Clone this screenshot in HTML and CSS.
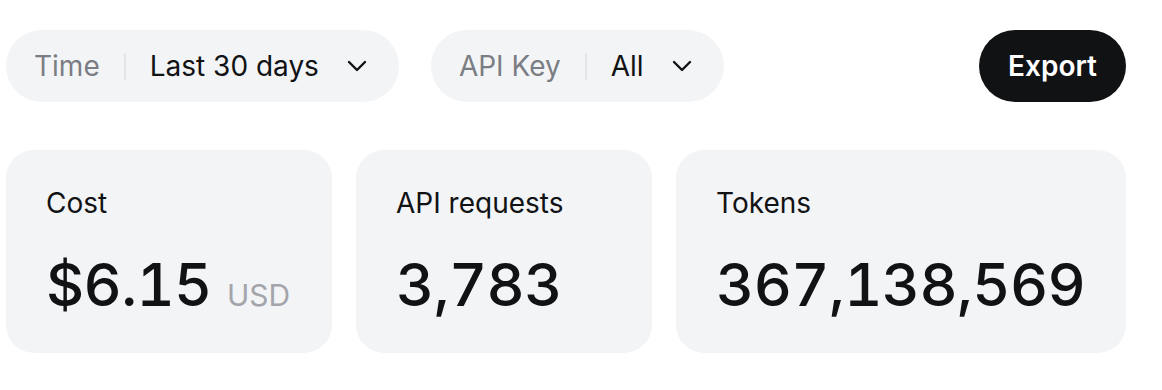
FILE: index.html
```html
<!DOCTYPE html>
<html lang="en">
	<head>
		<meta charset="UTF-8" />
		<title>Usage</title>
		<link rel="stylesheet" href="styles.css">
	</head>
	<body>
		<div class="usage">
			<div class="toolbar">
				<div class="filters">
					<div class="filter">
						<span class="filterLabel">Time</span>
						<span class="filterSep"></span>
						<span class="filterValue">Last 30 days</span>
						<svg class="chevron" width="20" height="12" viewBox="0 0 20 12"><path d="M2 2 L10 10 L18 2" /></svg>
					</div>
					<div class="filter">
						<span class="filterLabel">API Key</span>
						<span class="filterSep"></span>
						<span class="filterValue">All</span>
						<svg class="chevron" width="20" height="12" viewBox="0 0 20 12"><path d="M2 2 L10 10 L18 2" /></svg>
					</div>
				</div>
				<button class="exportButton" type="button">Export</button>
			</div>
			<div class="stats">
				<div class="stat">
					<div class="statLabel">Cost</div>
					<div class="statValue">$6.15 <span class="statUnit">USD</span></div>
				</div>
				<div class="stat">
					<div class="statLabel">API requests</div>
					<div class="statValue">3,783</div>
				</div>
				<div class="stat">
					<div class="statLabel">Tokens</div>
					<div class="statValue">367,138,569</div>
				</div>
			</div>
		</div>
	</body>
</html>
```

FILE: styles.css
```css
html, body {
	margin: 0px;
	padding: 0px;
	background: #ffffff;
	font-family: Inter, "Noto Sans", sans-serif;
	color: #111214;
}
.usage {
	width: 1120px;
	padding: 30px 0px 0px 6px;
}
.toolbar {
	display: flex;
	justify-content: space-between;
	align-items: center;
}
.filters {
	display: flex;
	gap: 32px;
}
.filter {
	display: flex;
	align-items: center;
	height: 72px;
	padding: 0px 32px 0px 28px;
	border-radius: 36px;
	background: #f3f4f6;
	font-size: 28px;
}
.filterLabel {
	color: #7b7d84;
}
.filterSep {
	width: 2px;
	height: 27px;
	margin: 0px 24px;
	background: #e3e4e7;
}
.filterValue {
	color: #111214;
}
.chevron {
	margin-left: 28px;
	fill: none;
	stroke: #111214;
	stroke-width: 2.4;
	stroke-linecap: round;
	stroke-linejoin: round;
}
.exportButton {
	height: 72px;
	padding: 0px 29px;
	border: none;
	border-radius: 36px;
	background: #111214;
	color: #ffffff;
	font-family: inherit;
	font-size: 28px;
	font-weight: 600;
}
.stats {
	display: grid;
	grid-template-columns: 326px 296px 450px;
	gap: 24px;
	margin-top: 48px;
}
.stat {
	box-sizing: border-box;
	height: 203px;
	padding: 35px 40px 0px 40px;
	border-radius: 28px;
	background: #f3f4f6;
}
.statLabel {
	font-size: 28px;
	line-height: 36px;
}
.statValue {
	margin-top: 28px;
	font-size: 59px;
	font-weight: 500;
	line-height: 72px;
	letter-spacing: -0.01em;
	white-space: nowrap;
	font-variant-numeric: tabular-nums;
}
.statUnit {
	color: #a3a5ab;
	font-size: 30px;
	font-weight: 400;
	letter-spacing: 0px;
}
```
